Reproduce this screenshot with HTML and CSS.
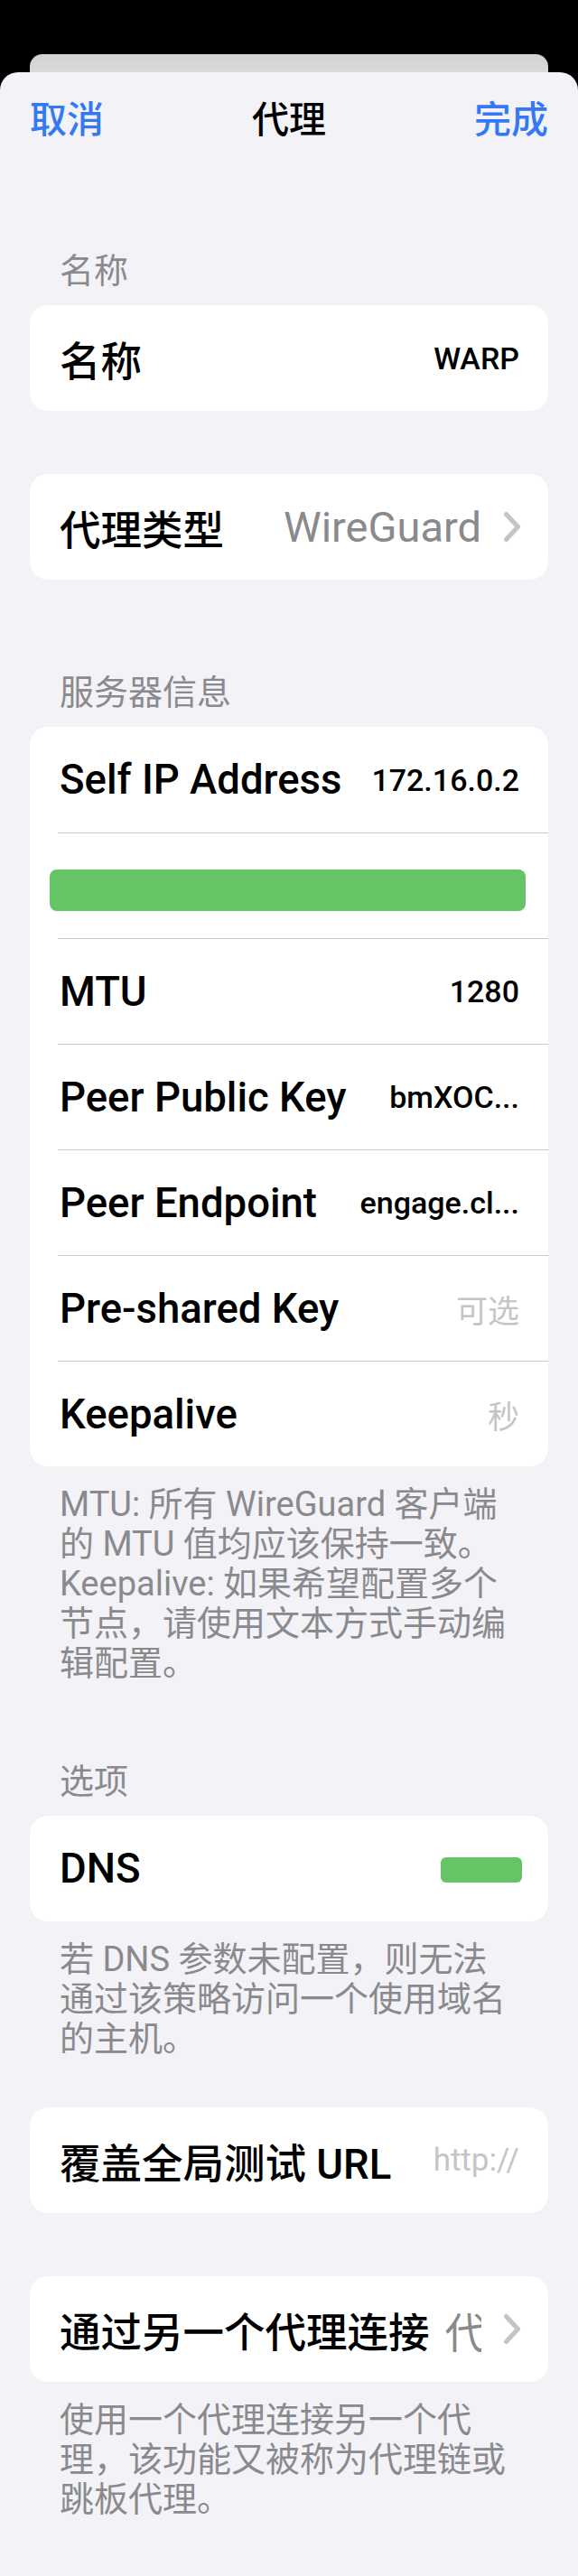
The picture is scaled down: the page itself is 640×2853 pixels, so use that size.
FILE: index.html
```html
<!DOCTYPE html>
<html lang="zh-CN">
<head>
<meta charset="utf-8">
<title>代理</title>
<link rel="stylesheet" href="styles.css">
</head>
<body>
<div class="screen">
  <div class="back-sheet"></div>
  <div class="sheet">
    <header class="nav">
      <span class="nav-btn nav-left">取消</span>
      <span class="nav-title">代理</span>
      <span class="nav-btn nav-right">完成</span>
    </header>

    <section class="group">
      <div class="group-header">名称</div>
      <div class="card">
        <div class="row"><div class="row-body"><span class="label">名称</span><span class="value">WARP</span></div></div>
      </div>
    </section>

    <section class="group">
      <div class="card">
        <div class="row"><div class="row-body">
          <span class="label">代理类型</span>
          <span class="value value--big value--gray">WireGuard</span>
          <svg class="chevron" width="20" height="35" viewBox="0 0 20 35"><path d="M3.5 3.5 L16.5 17.5 L3.5 31.5" fill="none" stroke="#c4c4c7" stroke-width="5" stroke-linecap="round" stroke-linejoin="round"/></svg>
        </div></div>
      </div>
    </section>

    <section class="group">
      <div class="group-header">服务器信息</div>
      <div class="card">
        <div class="row"><div class="row-body"><span class="label">Self IP Address</span><span class="value">172.16.0.2</span></div></div>
        <div class="row"><div class="row-body row-body--bar"><span class="bar"></span></div></div>
        <div class="row"><div class="row-body"><span class="label">MTU</span><span class="value">1280</span></div></div>
        <div class="row"><div class="row-body"><span class="label">Peer Public Key</span><span class="value">bmXOC...</span></div></div>
        <div class="row"><div class="row-body"><span class="label">Peer Endpoint</span><span class="value">engage.cl...</span></div></div>
        <div class="row"><div class="row-body"><span class="label">Pre-shared Key</span><span class="value value--placeholder">可选</span></div></div>
        <div class="row"><div class="row-body"><span class="label">Keepalive</span><span class="value value--placeholder">秒</span></div></div>
      </div>
      <p class="footnote">MTU: 所有 WireGuard 客户端的 MTU 值均应该保持一致。Keepalive: 如果希望配置多个节点，请使用文本方式手动编辑配置。</p>
    </section>

    <section class="group">
      <div class="group-header">选项</div>
      <div class="card">
        <div class="row"><div class="row-body"><span class="label">DNS</span><span class="dns-bar"></span></div></div>
      </div>
      <p class="footnote">若 DNS 参数未配置，则无法通过该策略访问一个使用域名的主机。</p>
    </section>

    <section class="group">
      <div class="card">
        <div class="row"><div class="row-body"><span class="label">覆盖全局测试 URL</span><span class="value value--placeholder">http://</span></div></div>
      </div>
    </section>

    <section class="group">
      <div class="card">
        <div class="row"><div class="row-body">
          <span class="label">通过另一个代理连接</span>
          <span class="value value--big value--gray value--clip">代理链</span>
          <svg class="chevron" width="20" height="35" viewBox="0 0 20 35"><path d="M3.5 3.5 L16.5 17.5 L3.5 31.5" fill="none" stroke="#c4c4c7" stroke-width="5" stroke-linecap="round" stroke-linejoin="round"/></svg>
        </div></div>
      </div>
      <p class="footnote">使用一个代理连接另一个代理，该功能又被称为代理链或跳板代理。</p>
    </section>
  </div>
</div>
</body>
</html>
```

FILE: styles.css
```css
* { box-sizing: border-box; }

html, body {
  margin: 0;
  padding: 0;
  background: #000;
}

body {
  font-family: "Roboto", "Noto Sans CJK SC", sans-serif;
  color: #000;
  text-spacing-trim: space-all;
}

.screen {
  min-height: 100vh;
  display: flex;
  flex-direction: column;
  padding-top: 60px;
}

.back-sheet {
  height: 20px;
  margin: 0 33px;
  background: linear-gradient(#d2d2d4, #dadadc);
  border-radius: 14px 14px 0 0;
}

.sheet {
  flex: 1;
  background: #f2f2f7;
  border-radius: 20px 20px 0 0;
  padding-bottom: 60px;
}

.nav {
  display: grid;
  grid-template-columns: 1fr auto 1fr;
  align-items: center;
  padding: 28px 33px 87px;
  font-size: 41px;
  line-height: 50px;
  font-weight: 500;
}

.nav-btn { color: #3478f6; }
.nav-left { justify-self: start; }
.nav-right { justify-self: end; }
.nav-title { color: #000; }

.group {
  display: flex;
  flex-direction: column;
  padding: 0 33px;
}

.group + .group {
  margin-top: 54px;
}

.group-header {
  padding: 33px 33px 0;
  margin-bottom: 15px;
  font-size: 38px;
  line-height: 45px;
  color: #8a8a8e;
}

.card {
  background: #fff;
  border-radius: 20px;
  overflow: hidden;
  margin-bottom: 16px;
}

.row {
  padding-left: 31px;
}

.row-body {
  height: 117px;
  display: flex;
  align-items: center;
  padding-right: 32px;
}

.row + .row .row-body {
  border-top: 1px solid #c8c8cc;
}

.label {
  flex-shrink: 0;
  font-size: 45.5px;
  font-weight: 500;
  white-space: nowrap;
  padding-left: 2px;
}

.value {
  margin-left: auto;
  font-size: 34px;
  font-weight: 500;
  white-space: nowrap;
  color: #000;
}

.value--big { font-size: 47px; font-weight: 400; }
.value--gray { color: #8a8a8e; }
.value--placeholder { color: #c5c5c7; font-size: 35px; font-weight: 400; }

.value--clip {
  flex: 1 1 auto;
  min-width: 0;
  overflow: hidden;
  margin-left: 17px;
  font-size: 46px;
}

.chevron {
  flex-shrink: 0;
  margin-left: 24px;
  margin-right: -2px;
}

.row-body--bar {
  padding-right: 25px;
}

.bar {
  flex: 1;
  height: 46px;
  margin-left: -9px;
  margin-top: 10px;
  background: #65c466;
  border-radius: 8px;
}

.dns-bar {
  margin-left: auto;
  margin-right: -3px;
  margin-top: 3px;
  width: 90px;
  height: 28px;
  background: #65c466;
  border-radius: 6px;
}

.footnote {
  margin: 4px 0 0;
  padding: 0 33px;
  font-size: 38px;
  line-height: 44px;
  color: #8a8a8e;
}
```
